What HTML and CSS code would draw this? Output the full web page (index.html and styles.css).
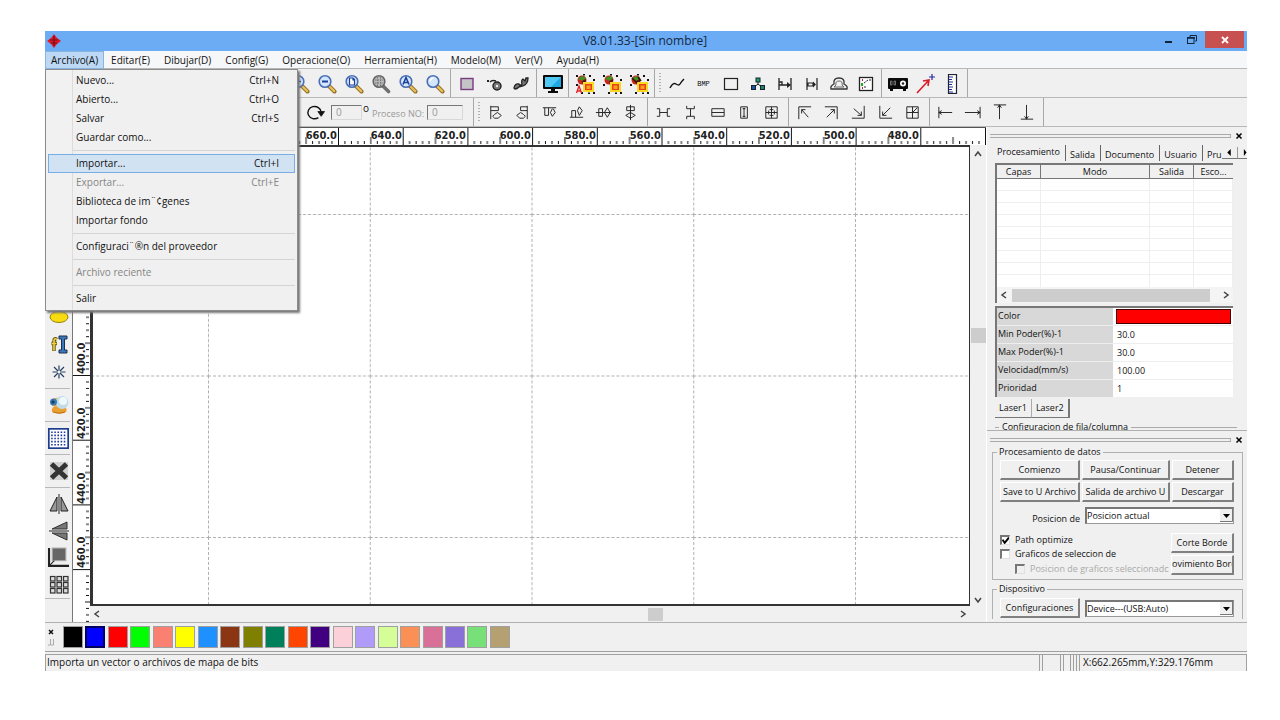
FILE: index.html
```
<!DOCTYPE html>
<html lang="es">
<head>
<meta charset="utf-8">
<title>V8.01.33-[Sin nombre]</title>
<link rel="stylesheet" href="styles.css">
</head>
<body>
<svg class="defs" aria-hidden="true">
  <defs>
    <symbol id="lens" viewBox="0 0 20 20">
      <path d="M12 12l5.500 5.500" stroke="#8a6a20" stroke-width="4" stroke-linecap="round"/>
      <path d="M12 12l5.200 5.200" stroke="#e8bd58" stroke-width="2.400" stroke-linecap="round"/>
      <circle cx="8" cy="7.500" r="5.800" fill="#d4e6fb" stroke="#4a6fb5" stroke-width="1.600"/>
    </symbol>
    <symbol id="photos" viewBox="0 0 20 20">
      <circle cx="7" cy="6" r="4.500" fill="#c8281c"/>
      <path d="M3 5q4-5 8-1l-3 3z" fill="#3d9420"/>
      <path d="M7 7l4-2v3l-3 3z" fill="#5a1408"/>
      <rect x="9" y="9" width="9" height="8" fill="#e8401c" stroke="#f8d820" stroke-width="2"/>
      <rect x="11.500" y="11.500" width="4" height="3.500" fill="#f8a018"/>
      <g fill="#111"><rect x="1" y="1" width="2" height="2"/><rect x="8" y="0" width="2" height="1.500"/><rect x="14" y="1" width="2" height="2"/><rect x="1" y="10" width="2" height="2"/><rect x="18" y="5" width="2" height="2"/><rect x="6" y="18" width="2" height="2"/><rect x="13" y="18.500" width="2" height="1.500"/><rect x="18" y="18" width="2" height="2"/></g>
    </symbol>
  </defs>
</svg>

<div class="app">
  <header class="titlebar">
    <svg class="logo" viewBox="0 0 14 14"><path d="M7 0l2.500 3.500L14 7l-4.500 3.500L7 14l-2.500-3.500L0 7l4.500-3.500z" fill="#e01828"/><path d="M7 2v10M3 6h8M4 9h6" stroke="#701018" stroke-width="1.200"/></svg>
    <h1 class="title">V8.01.33-[Sin nombre]</h1>
    <div class="winbtns">
      <button class="winbtn" aria-label="Minimizar"><svg viewBox="0 0 12 12"><path d="M2 8h7" stroke="#10243c" stroke-width="2"/></svg></button>
      <button class="winbtn" aria-label="Restaurar"><svg viewBox="0 0 12 12"><path d="M4 3V1.500h6.500V7H9" fill="none" stroke="#10243c"/><rect x="1.500" y="3.500" width="6.500" height="6" fill="none" stroke="#10243c"/><path d="M1 4h8" stroke="#10243c" stroke-width="1.500"/></svg></button>
      <button class="winbtn close" aria-label="Cerrar"><svg viewBox="0 0 12 12"><path d="M3 3l6 6M9 3l-6 6" stroke="#fff" stroke-width="1.800"/></svg></button>
    </div>
  </header>

  <nav class="menubar">
    <button class="menu open">Archivo(A)</button><button class="menu">Editar(E)</button><button class="menu">Dibujar(D)</button><button class="menu">Config(G)</button><button class="menu">Operacione(O)</button><button class="menu">Herramienta(H)</button><button class="menu">Modelo(M)</button><button class="menu">Ver(V)</button><button class="menu">Ayuda(H)</button>
    <div class="dropdown" role="menu">
      <button class="item"><span>Nuevo...</span><span>Ctrl+N</span></button>
      <button class="item"><span>Abierto...</span><span>Ctrl+O</span></button>
      <button class="item"><span>Salvar</span><span>Ctrl+S</span></button>
      <button class="item"><span>Guardar como...</span></button>
      <hr class="rule">
      <button class="item active"><span>Importar...</span><span>Ctrl+I</span></button>
      <button class="item" disabled><span>Exportar...</span><span>Ctrl+E</span></button>
      <button class="item"><span>Biblioteca de im¨¢genes</span></button>
      <button class="item"><span>Importar fondo</span></button>
      <hr class="rule">
      <button class="item"><span>Configuraci¨®n del proveedor</span></button>
      <hr class="rule">
      <button class="item" disabled><span>Archivo reciente</span></button>
      <hr class="rule">
      <button class="item"><span>Salir</span></button>
    </div>
  </nav>

  <div class="toolbar main-tools">
    <div class="group">
      <button class="tool" aria-label="Acercar"><svg viewBox="0 0 20 20"><use href="#lens"/><path d="M5 7.500h6M8 4.500v6" stroke="#1c3f9c" stroke-width="1.600"/></svg></button>
      <button class="tool" aria-label="Alejar"><svg viewBox="0 0 20 20"><use href="#lens"/><path d="M5 7.500h6" stroke="#1c3f9c" stroke-width="2"/></svg></button>
      <button class="tool" aria-label="Ver página"><svg viewBox="0 0 20 20"><use href="#lens"/><path d="M5.500 4h3.500l1.500 1.500V11h-5zM9 4v2h1.500" fill="#fff" stroke="#1c3f9c" stroke-width="1.200"/></svg></button>
      <button class="tool" aria-label="Ver datos"><svg viewBox="0 0 20 20"><path d="M12 12l5.500 5.500" stroke="#707070" stroke-width="3.600" stroke-linecap="round"/><circle cx="8" cy="7.500" r="5.800" fill="#b8b8b8" stroke="#666" stroke-width="1.600"/><path d="M4 6h8M4 9h8M6.500 3v9M9.500 3v9" stroke="#777" stroke-dasharray="1.500 1"/></svg></button>
      <button class="tool" aria-label="Ver todo"><svg viewBox="0 0 20 20"><use href="#lens"/><path d="M5 10.500l3-7 3 7M6 8.500h4" fill="none" stroke="#1c3f9c" stroke-width="1.600"/></svg></button>
      <button class="tool" aria-label="Ver marco"><svg viewBox="0 0 20 20"><use href="#lens"/><path d="M5 7q1-3 3.500-3" fill="none" stroke="#fff" stroke-width="1.500"/></svg></button>
    </div>
    <div class="group">
      <button class="tool" aria-label="Marco"><svg viewBox="0 0 20 20"><rect x="4" y="4.500" width="12" height="11" fill="#c4c4c8" stroke="#7a3a80" stroke-width="1.400"/></svg></button>
      <button class="tool" aria-label="Punto"><svg viewBox="0 0 20 20"><circle cx="13" cy="12" r="4" fill="#777" stroke="#222" stroke-width="1.400"/><circle cx="13" cy="12" r="1.200" fill="#eee"/><path d="M6 8q2-2.500 6-1" fill="none" stroke="#222" stroke-width="1.400"/><path d="M3 6h2v2H3z" fill="#222"/></svg></button>
      <button class="tool" aria-label="Cadena"><svg viewBox="0 0 20 20"><path d="M3 14q1-5 5-4 2 1 0 3t-4 2zM8 13l3-3q-1-4 1-5l2 2 1-3h2q0 6-5 8z" fill="#777" stroke="#222" stroke-width="1.300"/></svg></button>
    </div>
    <div class="group">
      <button class="tool" aria-label="Vista previa"><svg viewBox="0 0 20 20"><rect x="0" y="1" width="20" height="14" rx="1" fill="#0a0a0a"/><rect x="2" y="3" width="16" height="10" fill="#20a8e0"/><path d="M2 3h16L8 13H2z" fill="#50c8f4"/><path d="M8 15h4v2h3v2H5v-2h3z" fill="#0a0a0a"/></svg></button>
    </div>
    <div class="group">
      <button class="tool" aria-label="Imagen A"><svg viewBox="0 0 20 20"><use href="#photos"/><path d="M1.500 19l2.500-7 2.500 7M2.500 17h3" fill="none" stroke="#e02020" stroke-width="1.300"/></svg></button>
      <button class="tool" aria-label="Imagen B"><svg viewBox="0 0 20 20"><use href="#photos"/></svg></button>
      <button class="tool" aria-label="Imagen C"><svg viewBox="0 0 20 20"><use href="#photos"/><path d="M3 4l5 5M9 3l3 4" stroke="#301008" stroke-width="1.500"/></svg></button>
    </div>
    <div class="group grip">
      <button class="tool" aria-label="Curva"><svg viewBox="0 0 20 20"><path d="M3 14q3-6 6-4t4 0 4-5" fill="none" stroke="#111" stroke-width="1.400"/></svg></button>
      <button class="tool bmp">BMP</button>
      <button class="tool" aria-label="Rectángulo"><svg viewBox="0 0 20 20"><rect x="3.500" y="4.500" width="13" height="11" fill="none" stroke="#222" stroke-width="1.200"/></svg></button>
      <button class="tool" aria-label="Nodos"><svg viewBox="0 0 20 20"><path d="M10 6v5M5 14l5-4 5 4" fill="none" stroke="#222"/><g stroke="#123"><rect x="8" y="4" width="4" height="4" fill="#20a060"/><rect x="3.500" y="11.500" width="4" height="4" fill="#2050a0"/><rect x="12.500" y="11.500" width="4" height="4" fill="#208060"/></g></svg></button>
      <button class="tool" aria-label="Ancho"><svg viewBox="0 0 20 20"><path d="M4 4v12M16 4v12M4 8h3v3M4 11h9" fill="none" stroke="#222" stroke-width="1.300"/><path d="M12 8l4 3-4 3z" fill="#222"/></svg></button>
      <button class="tool" aria-label="Separación"><svg viewBox="0 0 20 20"><path d="M5 4v12M15 4v12M6 9h5v3H6z" fill="none" stroke="#222" stroke-width="1.200"/><path d="M11 7.500l3 3-3 3z" fill="#222"/></svg></button>
      <button class="tool" aria-label="Contorno"><svg viewBox="0 0 20 20"><path d="M5 10q-1-6 5-6t5 6q4 2 3 5H2q-1-3 3-5z" fill="none" stroke="#333" stroke-width="1.300"/><path d="M7 11q-1-4 3-4t3 4l2 2H5z" fill="none" stroke="#666"/></svg></button>
      <button class="tool" aria-label="Lista"><svg viewBox="0 0 20 20"><rect x="3.500" y="3.500" width="13" height="13" fill="#fff" stroke="#222" stroke-width="1.300"/><path d="M6 6h1M6 14h1" stroke="#c22" stroke-width="2"/><path d="M6 9v3" stroke="#2a2" stroke-width="2"/><path d="M8 9l4-3h3M8 13h3" stroke="#224" fill="none" stroke-dasharray="2 1"/></svg></button>
    </div>
    <div class="group">
      <button class="tool" aria-label="Cámara"><svg viewBox="0 0 20 20"><rect x="0" y="4" width="20" height="11" rx="1" fill="#0a0a0a"/><path d="M2 15h3v2H2zM15 15h3v2h-3z" fill="#0a0a0a"/><path d="M2.500 7h1.500v4H2.500zM6 7h1.500v4H6z" fill="none" stroke="#999" stroke-width=".7"/><circle cx="15" cy="9.500" r="3" fill="#fff"/><circle cx="15" cy="9.500" r="1.200" fill="#222"/></svg></button>
      <button class="tool" aria-label="Origen"><svg viewBox="0 0 20 20"><path d="M2 19L14 6M8 7l6-1-1 6" fill="none" stroke="#d81c28" stroke-width="1.600"/><path d="M17 0v6M14 3h6" stroke="#2828a0" stroke-width="1.200"/></svg></button>
      <button class="tool" aria-label="Regla"><svg viewBox="0 0 20 20"><rect x="6.500" y=".5" width="8" height="19" fill="#fff" stroke="#223" stroke-width="1.200"/><path d="M7 3h4M7 5.500h3M7 8h4M7 10.500h3M7 13h4M7 15.500h3M7 18h4" stroke="#2030a0"/></svg></button>
    </div>
  </div>

  <div class="toolbar edit-tools">
    <div class="group fields">
      <button class="tool" aria-label="Girar"><svg viewBox="0 0 20 20"><path d="M13 15.500a7 6.500 0 1 1 3-6" fill="none" stroke="#111" stroke-width="1.500"/><path d="M12.500 9h7L16 14z" fill="#111"/></svg></button>
      <input class="field angle" aria-label="Ángulo" value="0"><span class="degree">o</span>
      <label class="process" for="proc">Proceso NO:</label><input class="field proc" id="proc" value="0">
    </div>
    <div class="group grip">
      <button class="tool" aria-label="Alinear izquierda"><svg viewBox="0 0 20 20"><path d="M5 3v14M5 4h8v4H5M9 12l3-2 4 3-3 3H9l-2-2z"/></svg></button>
      <button class="tool" aria-label="Alinear derecha"><svg viewBox="0 0 20 20"><path d="M15 3v14M15 4H8v4h7M11 12l-3-2-4 3 3 3h4l2-2z"/></svg></button>
      <button class="tool" aria-label="Alinear arriba"><svg viewBox="0 0 20 20"><path d="M3 5h14M5 5v8h4V5M13 6l-2 4 2 4 3-4-2-4"/></svg></button>
      <button class="tool" aria-label="Alinear abajo"><svg viewBox="0 0 20 20"><path d="M3 15h14M5 15V8h4v7M13 4l-2 4 2 5 3-5z"/></svg></button>
      <button class="tool" aria-label="Centrar vertical"><svg viewBox="0 0 20 20"><path d="M2 10h16M5 6h4v8H5zM14 5l-3 5 3 5 3-5z"/></svg></button>
      <button class="tool" aria-label="Centrar horizontal"><svg viewBox="0 0 20 20"><path d="M10 2v16M6 4h8v4H6zM10 10l-5 3 5 3 5-3z"/></svg></button>
    </div>
    <div class="group">
      <button class="tool" aria-label="Espacio horizontal"><svg viewBox="0 0 20 20"><path d="M3 6h3v8H3M17 6h-3v8h3M6 10h8"/></svg></button>
      <button class="tool" aria-label="Espacio vertical"><svg viewBox="0 0 20 20"><path d="M6 3v3h8V3M6 17v-3h8v3M10 6v8"/></svg></button>
      <button class="tool" aria-label="Mismo ancho"><svg viewBox="0 0 20 20"><path d="M4 6h13v8H4zM4 10h13"/></svg></button>
      <button class="tool" aria-label="Mismo alto"><svg viewBox="0 0 20 20"><path d="M6 4h7v12H6zM9.500 5v10M8 6h3M8 14h3"/></svg></button>
      <button class="tool" aria-label="Mismo tamaño"><svg viewBox="0 0 20 20"><path d="M4 4h12v12H4zM4 10h12M10 4v12M7 8v4M13 8v4M8 7h4M8 13h4"/></svg></button>
    </div>
    <div class="group">
      <button class="tool" aria-label="Arriba izquierda"><svg viewBox="0 0 20 20"><path d="M4 17V4h13M7 7l7 8M7 11V7h4"/></svg></button>
      <button class="tool" aria-label="Arriba derecha"><svg viewBox="0 0 20 20"><path d="M3 4h13v13M5 15l8-8M9 7h4v4"/></svg></button>
      <button class="tool" aria-label="Abajo derecha"><svg viewBox="0 0 20 20"><path d="M16 3v13H3M5 6l8 7M13 9v4H9"/></svg></button>
      <button class="tool" aria-label="Abajo izquierda"><svg viewBox="0 0 20 20"><path d="M4 3v13h13M15 5l-8 8M7 9v4h4"/></svg></button>
      <button class="tool" aria-label="Centro"><svg viewBox="0 0 20 20"><path d="M4 4h12v12H4zM4 10h12M10 4v12M15 5l-5 5"/></svg></button>
    </div>
    <div class="group last">
      <button class="tool" aria-label="Mover izquierda"><svg viewBox="0 0 20 20"><path d="M3 4v12M3 10h14M6 8l-3 2 3 2"/></svg></button>
      <button class="tool" aria-label="Mover derecha"><svg viewBox="0 0 20 20"><path d="M18 4v12M2 10h16M15 8l3 2-3 2"/></svg></button>
      <button class="tool" aria-label="Mover arriba"><svg viewBox="0 0 20 20"><path d="M4 2h13M10 2v15M8 5l2-3 2 3"/></svg></button>
      <button class="tool" aria-label="Mover abajo"><svg viewBox="0 0 20 20"><path d="M4 17h13M10 2v15M8 14l2 3 2-3"/></svg></button>
    </div>
  </div>

  <main class="body">
    <aside class="sidebar">
      <div class="stack">
        <button class="tool" aria-label="Elipse"><svg viewBox="0 0 20 20"><ellipse cx="10" cy="11" rx="9" ry="5.500" fill="#f8dc10" stroke="#9a8010"/><path d="M9 5h2" stroke="#26a" stroke-width="2"/></svg></button>
        <button class="tool" aria-label="Texto"><svg viewBox="0 0 20 20"><path d="M8 5.500Q5 3.500 5 7v10M2.500 9.500H8" fill="none" stroke="#665510" stroke-width="3.400"/><path d="M8 5.500Q5 3.500 5 7v9.500M3 9.500h4.500" fill="none" stroke="#f0d440" stroke-width="1.600"/><path d="M10 2h8v3h-2.500v11H18v3h-8v-3h2.500V5H10z" fill="#3c78b8" stroke="#183050"/></svg></button>
        <button class="tool" aria-label="Punto"><svg viewBox="0 0 20 20"><path d="M10 3.500v5M10 11.500v5M3.500 10h5M11.500 10h5M5 5l4 4M15 5l-4 4M5 15l4-4M15 15l-4-4" stroke="#284060" stroke-width="1.200"/></svg></button>
      </div>
      <div class="stack">
        <button class="tool" aria-label="Cámara"><svg viewBox="0 0 20 20"><path d="M3 17q-1-5 4-6h8q4 3 2 6-6 3.500-14 0z" fill="#eaa030"/><path d="M4 17q6 2.500 12 0" fill="none" stroke="#b87018"/><path d="M2 5q4-3 9-2v9l-8-1z" fill="#e8a850"/><circle cx="13" cy="7.500" r="6.500" fill="#c0dce8"/><circle cx="14" cy="6" r="4" fill="#eef8fa"/><circle cx="4.500" cy="7" r="3.500" fill="#3a78b0"/><circle cx="4" cy="7" r="1.600" fill="#123c60"/></svg></button>
      </div>
      <div class="stack">
        <button class="tool wide" aria-label="Matriz"><svg viewBox="0 0 20 20"><rect x=".8" y=".8" width="18.400" height="18.400" fill="#fff" stroke="#1c3c8c" stroke-width="1.600"/><path d="M3 4h15M3 7h15M3 10h15M3 13h15M3 16h15" stroke="#2038a0" stroke-width="1.500" stroke-dasharray="1.500 1.500"/></svg></button>
      </div>
      <div class="stack">
        <button class="tool" aria-label="Eliminar"><svg viewBox="0 0 20 20"><path d="M1 1h18v18H1z" fill="#bbb" opacity=".6"/><path d="M2.500 3l15 14M17.500 3l-15 14" stroke="#333" stroke-width="5"/></svg></button>
      </div>
      <div class="stack end">
        <button class="tool" aria-label="Espejo horizontal"><svg viewBox="0 0 20 20"><path d="M8 3v14H1zM12 3v14h7z" fill="#999" stroke="#222"/><path d="M10 0v20" stroke="#222"/></svg></button>
        <button class="tool" aria-label="Espejo vertical"><svg viewBox="0 0 20 20"><path d="M18 1v7H3zM18 19v-7H3z" fill="#777" stroke="#333"/><path d="M0 10h20" stroke="#222"/></svg></button>
        <button class="tool wide" aria-label="Acoplar"><svg viewBox="0 0 20 20"><rect x="4" y="1" width="13" height="12" fill="#666" stroke="#aaa"/><path d="M1 1v17h19" fill="none" stroke="#222" stroke-width="2"/><path d="M1 18l5-5" stroke="#222"/></svg></button>
        <button class="tool" aria-label="Cuadrícula"><svg viewBox="0 0 20 20"><g fill="#ddd" stroke="#333" stroke-width="1.200"><rect x="1.500" y="1.500" width="4.500" height="4.500"/><rect x="8" y="1.500" width="4.500" height="4.500"/><rect x="14.500" y="1.500" width="4.500" height="4.500"/><rect x="1.500" y="7.500" width="4.500" height="4.500"/><rect x="8" y="7.500" width="4.500" height="4.500"/><rect x="14.500" y="7.500" width="4.500" height="4.500"/><rect x="1.500" y="13.500" width="4.500" height="4.500"/><rect x="8" y="13.500" width="4.500" height="4.500"/><rect x="14.500" y="13.500" width="4.500" height="4.500"/></g></svg></button>
      </div>
    </aside>

    <section class="work">
      <svg class="ruler-x">
        <defs><pattern id="tx" x="265" y="0" width="64.700" height="17" patternUnits="userSpaceOnUse">
          <path d="M.5 0v17M32.800 9v7M6.900 13v3M13.400 13v3M19.900 13v3M26.300 13v3M39.300 13v3M45.800 13v3M52.200 13v3M58.700 13v3" stroke="#111"/>
        </pattern></defs>
        <rect width="100%" height="17" fill="url(#tx)"/>
        <g class="nums" text-anchor="end"><text x="264" y="11">660.0</text><text x="329" y="11">640.0</text><text x="393" y="11">620.0</text><text x="458" y="11">600.0</text><text x="523" y="11">580.0</text><text x="588" y="11">560.0</text><text x="652" y="11">540.0</text><text x="717" y="11">520.0</text><text x="782" y="11">500.0</text><text x="846" y="11">480.0</text></g>
      </svg>
      <svg class="ruler-y">
        <defs><pattern id="ty" x="0" y="230" width="17" height="64.700" patternUnits="userSpaceOnUse">
          <path d="M0 .5h17M12 32.800h5M13 6.900h3M13 13.400h3M13 19.900h3M13 26.300h3M13 39.300h3M13 45.800h3M13 52.200h3M13 58.700h3" stroke="#111"/>
        </pattern></defs>
        <rect width="17" height="100%" fill="url(#ty)"/>
        <g class="nums"><text transform="translate(12 229) rotate(-90)">400.0</text><text transform="translate(12 294) rotate(-90)">420.0</text><text transform="translate(12 359) rotate(-90)">440.0</text><text transform="translate(12 423) rotate(-90)">460.0</text></g>
      </svg>
      <svg class="canvas">
        <defs><pattern id="grid" x="115" y="67" width="161.750" height="161.500" patternUnits="userSpaceOnUse">
          <path d="M.5 0v161.500M0 .5h161.750" stroke="#b0b0b0" stroke-dasharray="3 2"/>
        </pattern></defs>
        <rect width="100%" height="100%" fill="url(#grid)"/>
      </svg>
      <div class="scroll-y"><svg class="arrow" viewBox="0 0 8 8"><path d="M1 6l3-4 3 4"/></svg><i class="thumb"></i><svg class="arrow" viewBox="0 0 8 8"><path d="M1 2l3 4 3-4"/></svg></div>
      <div class="scroll-x"><svg class="arrow" viewBox="0 0 8 8"><path d="M6 1L2 4l4 3"/></svg><i class="thumb"></i><svg class="arrow" viewBox="0 0 8 8"><path d="M2 1l4 3-4 3"/></svg></div>
    </section>

    <aside class="panels">
      <section class="dock dock-top">
        <div class="dock-head"><i class="handle"></i><button class="dock-x" aria-label="Cerrar panel"><svg viewBox="0 0 8 8"><path d="M1.500 1.500l5 5M6.500 1.500l-5 5"/></svg></button></div>
        <div class="tabs">
          <button class="tab selected">Procesamiento</button><button class="tab">Salida</button><button class="tab">Documento</button><button class="tab">Usuario</button><button class="tab cut">Pru</button>
          <button class="tab-arrow" aria-label="Anterior"><svg viewBox="0 0 8 8"><path d="M6 0v8L2 4z"/></svg></button><button class="tab-arrow next" aria-label="Siguiente"><svg viewBox="0 0 8 8"><path d="M5 0v8l3-4z"/></svg></button>
        </div>
        <div class="layers">
          <table class="layer-table">
            <thead><tr><th class="c1">Capas</th><th>Modo</th><th class="c3">Salida</th><th class="c4">Esco...</th></tr></thead>
            <tbody>
              <tr><td></td><td></td><td></td><td></td></tr><tr><td></td><td></td><td></td><td></td></tr><tr><td></td><td></td><td></td><td></td></tr>
              <tr><td></td><td></td><td></td><td></td></tr><tr><td></td><td></td><td></td><td></td></tr><tr><td></td><td></td><td></td><td></td></tr>
              <tr><td></td><td></td><td></td><td></td></tr><tr><td></td><td></td><td></td><td></td></tr><tr><td></td><td></td><td></td><td></td></tr>
            </tbody>
          </table>
          <div class="list-scroll"><svg class="arrow" viewBox="0 0 8 8"><path d="M6 1L2 4l4 3"/></svg><i class="thumb"></i><svg class="arrow" viewBox="0 0 8 8"><path d="M2 1l4 3-4 3"/></svg></div>
        </div>
        <dl class="props">
          <dt>Color</dt><dd class="color"><i></i></dd>
          <dt>Min Poder(%)-1</dt><dd>30.0</dd>
          <dt>Max Poder(%)-1</dt><dd>30.0</dd>
          <dt>Velocidad(mm/s)</dt><dd>100.00</dd>
          <dt>Prioridad</dt><dd>1</dd>
        </dl>
        <div class="lasers"><button class="laser">Laser1</button><button class="laser raised">Laser2</button></div>
        <div class="cut-group"><span>Configuracion de fila/columna</span></div>
      </section>

      <section class="dock dock-bottom">
        <div class="dock-head"><i class="handle"></i><button class="dock-x" aria-label="Cerrar panel"><svg viewBox="0 0 8 8"><path d="M1.500 1.500l5 5M6.500 1.500l-5 5"/></svg></button></div>
        <fieldset class="box">
          <legend>Procesamiento de datos</legend>
          <div class="actions">
            <button class="btn">Comienzo</button><button class="btn">Pausa/Continuar</button><button class="btn">Detener</button>
            <button class="btn">Save to U Archivo</button><button class="btn">Salida de archivo U</button><button class="btn">Descargar</button>
          </div>
          <div class="row"><label class="rowlabel" for="pos">Posicion de</label><select class="select" id="pos"><option>Posicion actual</option></select></div>
          <div class="options">
            <div class="checks">
              <label class="check"><input type="checkbox" checked>Path optimize</label>
              <label class="check"><input type="checkbox">Graficos de seleccion de</label>
              <label class="check sub"><input type="checkbox" disabled><span>Posicion de graficos seleccionadc</span></label>
            </div>
            <div class="borders"><button class="btn">Corte Borde</button><button class="btn clipped">ovimiento Bord</button></div>
          </div>
        </fieldset>
        <fieldset class="box device">
          <legend>Dispositivo</legend>
          <div class="row"><button class="btn conf">Configuraciones</button><select class="select" aria-label="Dispositivo"><option>Device---(USB:Auto)</option></select></div>
        </fieldset>
      </section>
    </aside>
  </main>

  <div class="palette">
    <div class="palette-grip"><svg viewBox="0 0 8 20"><path d="M2 3l4 4M6 3L2 7" stroke="#111" stroke-width="1.500"/><path d="M3.500 12v6H1M6.500 12v6H4" fill="none" stroke="#aaa"/></svg></div>
    <div class="swatches">
      <button class="sw" aria-label="Color 1" style="background:#000"></button><button class="sw chosen" aria-label="Color 2" style="background:#0000ff"></button><button class="sw" aria-label="Color 3" style="background:#ff0000"></button><button class="sw" aria-label="Color 4" style="background:#00ff00"></button><button class="sw" aria-label="Color 5" style="background:#fa8072"></button><button class="sw" aria-label="Color 6" style="background:#ffff00"></button><button class="sw" aria-label="Color 7" style="background:#1e90ff"></button><button class="sw" aria-label="Color 8" style="background:#8b3513"></button><button class="sw" aria-label="Color 9" style="background:#808000"></button><button class="sw" aria-label="Color 10" style="background:#00805a"></button><button class="sw" aria-label="Color 11" style="background:#ff4500"></button><button class="sw" aria-label="Color 12" style="background:#400080"></button><button class="sw" aria-label="Color 13" style="background:#fcd0d8"></button><button class="sw" aria-label="Color 14" style="background:#b09cf8"></button><button class="sw" aria-label="Color 15" style="background:#d6fe98"></button><button class="sw" aria-label="Color 16" style="background:#fa9056"></button><button class="sw" aria-label="Color 17" style="background:#d87098"></button><button class="sw" aria-label="Color 18" style="background:#8870d8"></button><button class="sw" aria-label="Color 19" style="background:#78e078"></button><button class="sw" aria-label="Color 20" style="background:#b4a070"></button>
    </div>
  </div>

  <footer class="status">
    <span class="hint">Importa un vector o archivos de mapa de bits</span>
    <i class="cell w18"></i><i class="cell w8"></i><i class="cell w4"></i>
    <span class="cell coords">X:662.265mm,Y:329.176mm</span>
  </footer>
</div>
</body>
</html>
```
FILE: styles.css
```
* { box-sizing: border-box; }

body {
  margin: 0;
  padding: 31px 33px 49px 45px;
  background: #fff;
  color: #111;
  font: 10px/16px "Open Sans", "Noto Sans", sans-serif;
}

button, input, select { margin: 0; padding: 0; border: 0; background: none; color: inherit; font: inherit; border-radius: 0; }
svg { display: block; }
.defs { position: absolute; width: 0; height: 0; }

.app { display: flex; flex-direction: column; min-height: calc(100vh - 80px); background: #f0f0f0; }

/* Title bar */
.titlebar { display: flex; align-items: center; height: 20px; background: #6bacf5; }
.logo { width: 14px; height: 14px; margin-left: 2px; }
.title { flex: 1; margin: 0; padding-left: 72px; text-align: center; font-size: 12px; font-weight: 400; color: #16283e; }
.winbtns { display: flex; align-self: stretch; padding-right: 3px; }
.winbtn { display: flex; align-items: center; justify-content: center; width: 23px; height: 17px; }
.winbtn svg { width: 12px; height: 12px; }
.close { width: 39px; margin-left: 2px; background: #c75050; }

/* Menu bar */
.menubar { position: relative; display: flex; height: 18px; background: #f6f7f8; border-bottom: 1px solid #b8b8b8; z-index: 5; }
.menu { padding: 0 7px; height: 18px; }
.menu.open { padding: 0 6px; background: #bcd8f4; box-shadow: inset 0 0 0 1px #8ab4e0; }
.dropdown { position: absolute; left: 0; top: 18px; width: 253px; padding: 1px 2px 2px; background: linear-gradient(90deg, #f1f1f1 26px, #dcdcdc 26px, #dcdcdc 27px, #f0f0f0 27px); border: 1px solid #8c8c8c; box-shadow: 2px 2px 2px #777; }
.item { display: flex; justify-content: space-between; width: 100%; height: 19px; padding: 0 15px 0 27px; border: 1px solid transparent; }
.item:disabled { color: #858585; }
.item.active { background: #d1e2f2; border-color: #78aee5; }
.rule { height: 1px; margin: 3px 0 3px 25px; border: 0; background: #d4d4d4; }

/* Toolbars */
.toolbar { display: flex; height: 29px; border-bottom: 1px solid #b8b8b8; }
.main-tools { padding-left: 241px; }
.main-tools .group { padding: 0 2px; }
.edit-tools { padding-left: 257px; }
.group { display: flex; align-items: center; padding: 0 3px 0 2px; border-right: 1px solid #a8a8a8; }
.main-tools .group:first-child { padding-left: 0; }
.grip::before { content: ""; width: 2px; height: 20px; margin: 0 2px; background: repeating-linear-gradient(#b0b0b0 0 1px, transparent 1px 3px); }
.tool { display: flex; align-items: center; justify-content: center; width: 27px; height: 28px; padding-top: 1px; }
.tool svg { width: 20px; height: 20px; fill: none; }
.edit-tools .tool svg { width: 19px; height: 19px; stroke: #222; stroke-width: 1; }
.bmp { font: 7px "Liberation Mono", monospace; }
.fields { padding-right: 10px; padding-left: 0; }
.field { height: 15px; padding: 0 4px; border: 1px solid #d8d8d8; border-top-color: #777; border-left-color: #777; color: #999; }
.angle { width: 31px; margin-left: 2px; }
.proc { width: 36px; margin-left: 3px; }
.degree { width: 8px; margin: 0 1px; line-height: 8px; padding-bottom: 9px; }
.process { padding-top: 3px; color: #999; font: 9px/16px "Open Sans", sans-serif; white-space: nowrap; }

/* Body */
.body { flex: 1; display: grid; grid-template-columns: 28px minmax(0, 1fr) 261px; border-bottom: 1px solid #b0b0b0; }
.sidebar { padding: 175px 2px 0 0; border-right: 1px solid #777; }
.stack { padding: 0 0 2px; border-bottom: 1px solid #b8b8b8; margin-bottom: 2px; }
.sidebar .tool { margin: 0 auto; padding-top: 0; }
.stack .wide svg { width: 21px; height: 21px; }
.end { padding-bottom: 0; }
.end .tool { height: 27px; }

.work { display: grid; grid-template: 18px minmax(0, 1fr) 16px / 17px minmax(0, 1fr) 16px; background: #fff; }
.ruler-x { grid-area: 1 / 1 / 2 / 4; width: 100%; height: 18px; border-top: 1px solid #555; background: #fff; }
.ruler-y { grid-area: 2 / 1 / 4 / 2; width: 17px; height: 100%; }
.canvas { grid-area: 2 / 2; width: 100%; height: 100%; border: 1px solid #333; border-width: 2px 1px 2px 3px; }
.nums { font: 700 11px "DejaVu Sans Condensed", "DejaVu Sans", sans-serif; fill: #222; }
.scroll-y { grid-area: 2 / 3 / 4 / 4; display: flex; flex-direction: column; align-items: center; justify-content: space-between; padding: 5px 1px 18px; background: #f0f0f0; }
.scroll-x { grid-area: 3 / 2; display: flex; align-items: center; justify-content: space-between; padding: 0 3px; background: #f0f0f0; }
.scroll-x .thumb { margin-left: 250px; }
.arrow { width: 8px; height: 8px; fill: none; stroke: #444; stroke-width: 1.500; }
.thumb { width: 15px; height: 13px; background: #cdcdcd; }
.scroll-y .thumb { height: 15px; margin-bottom: 84px; }

/* Docked panels */
.panels { display: flex; flex-direction: column; border-left: 1px solid #fff; font-size: 9px; line-height: 14px; }
.dock { padding: 5px 0 0 3px; }
.dock-top { height: 304px; overflow: hidden; border-bottom: 1px solid #b0b0b0; }
.dock-head { display: flex; align-items: center; gap: 4px; height: 8px; }
.handle { flex: 1; height: 4px; border: 1px solid #aaa; border-left: 0; }
.dock-x svg { width: 8px; height: 8px; stroke: #000; stroke-width: 1.500; margin-right: 4px; }
.tabs { display: flex; align-items: center; height: 20px; margin-top: 3px; padding-left: 3px; }
.tab { padding: 3px 5px 0 4px; height: 16px; line-height: 13px; border-right: 1px solid #666; }
.tab.selected { padding: 0 5px 3px 4px; }
.cut { border: 0; padding-right: 0; }
.tab-arrow { flex: 1; height: 12px; border-bottom: 1px solid #777; border-right: 1px solid #999; }
.tab-arrow svg { width: 8px; height: 7px; margin: 0 auto; fill: #000; }
.next { flex: none; width: 9px; border-right: 0; }
.layers, .props { margin: 0 14px 0 5px; border-left: 2px solid #777; border-top: 2px solid #777; background: #fff; }
.layer-table { width: 100%; border-collapse: separate; border-spacing: 0; table-layout: fixed; }
.layer-table th { height: 14px; padding: 0; font-weight: 400; line-height: 13px; background: #f0f0f0; border-right: 1px solid #777; border-bottom: 1px solid #777; }
.layer-table th:last-child { border-right: 0; }
.layer-table td { height: 12px; padding: 0; border-right: 1px solid #eee; border-bottom: 1px solid #eee; }
.layer-table tr:last-child td { border-bottom: 0; }
.c1, .c3 { width: 44px; }
.c4 { width: 39px; }
.list-scroll { display: flex; align-items: center; gap: 4px; height: 16px; padding: 0 3px; background: #f4f4f4; }
.list-scroll .thumb { flex: 1; margin-right: 8px; }
.props { display: grid; grid-template-columns: 116px 1fr; grid-auto-rows: 17px; row-gap: 1px; margin-top: 3px; background: #eee; }
.props dt { margin: 0; padding-left: 1px; background: #d8d8d8; line-height: 16px; }
.props dd { margin: 0; padding: 1px 0 0 4px; background: #fff; line-height: 16px; }
.props .color { padding: 1px 2px 1px 3px; }
.color i { display: block; height: 15px; background: #f00; border: 1px solid #400; }
.lasers { display: flex; margin: 2px 0 0 5px; }
.laser { height: 19px; padding: 0 4px; border-right: 1px solid #aaa; border-bottom: 1px solid #777; }
.raised { border-right: 2px solid #777; }
.cut-group { display: flex; align-items: center; gap: 3px; margin: 2px 10px 0 5px; height: 14px; white-space: nowrap; }
.cut-group::before { content: ""; width: 4px; border-top: 1px solid #aaa; }
.cut-group::after { content: ""; flex: 1; border-top: 1px solid #aaa; }

.box { min-width: 0; margin: 1px 4px 0 2px; padding: 1px 8px 3px 7px; border: 1px solid #b0b0b0; }
.box legend { padding: 0 2px; margin-left: -3px; height: 14px; }
.actions { display: grid; grid-template-columns: 80px 88px minmax(0, 1fr); gap: 2px; }
.btn { height: 20px; white-space: nowrap; background: #f0f0f0; border: 1px solid #fff; border-right: 2px solid #808080; border-bottom: 2px solid #808080; line-height: 15px; }
.row { display: flex; align-items: center; }
.rowlabel { width: 80px; padding-top: 8px; text-align: right; }
.select { flex: 1; min-width: 0; height: 17px; margin-left: 5px; appearance: none; border: 1px solid #999; border-top: 2px solid #777; border-left: 2px solid #777; background: #fff url("data:image/svg+xml,%3Csvg xmlns='http://www.w3.org/2000/svg' width='13' height='13'%3E%3Cpath d='M0 0h13v13H0z' fill='%23f0f0f0'/%3E%3Cpath d='M12.500 0v12.500H0' fill='none' stroke='%23777'/%3E%3Cpath d='M3 5h7L6.500 9z'/%3E%3C/svg%3E") no-repeat right center; }
.box .row { margin-top: 2px; }
.options { display: flex; justify-content: space-between; margin-top: 7px; }
.checks { flex: 1; min-width: 0; }
.check { display: flex; align-items: center; height: 14px; white-space: nowrap; }
.check input { flex: none; appearance: none; width: 10px; height: 10px; margin-right: 5px; background: #fff; border: 1px solid #e0e0e0; border-top: 2px solid #777; border-left: 2px solid #777; }
.check input:checked { background: #fff url("data:image/svg+xml,%3Csvg xmlns='http://www.w3.org/2000/svg' viewBox='0 0 8 8'%3E%3Cpath d='M1 3l2 3 4-5' fill='none' stroke='black' stroke-width='1.800'/%3E%3C/svg%3E") no-repeat center / 8px; }
.check input:disabled { background: #f0f0f0; }
.sub { height: 15px; padding-left: 15px; color: #aaa; }
.borders { display: grid; gap: 1px; width: 63px; margin-left: 3px; }
.clipped { display: flex; justify-content: flex-start; overflow: hidden; }
.device { margin-top: 2px; padding-bottom: 1px; border-bottom: 0; }
.box.device .row { margin-top: 1px; }
.conf { width: 80px; }

/* Palette */
.palette { display: flex; align-items: center; height: 29px; border-bottom: 1px solid #a0a0a0; }
.palette-grip { width: 18px; padding-left: 2px; }
.palette-grip svg { width: 8px; height: 20px; }
.swatches { display: flex; justify-content: space-between; width: 447px; }
.sw { width: 20px; height: 22px; border: 1px solid #a0a0a0; }
.chosen { border: 2px solid #000060; }

/* Status bar */
.status { display: flex; gap: 2px; height: 17px; margin-top: 2px; border-top: 1px solid #a0a0a0; line-height: 14px; }
.hint { flex: 1; padding-left: 1px; border-left: 1px solid #a0a0a0; border-right: 1px solid #a0a0a0; }
.cell { border-left: 1px solid #a0a0a0; border-right: 1px solid #a0a0a0; }
.w18 { width: 19px; }
.w8 { width: 8px; }
.w4 { width: 4px; }
.coords { width: 168px; padding-left: 3px; }
```
